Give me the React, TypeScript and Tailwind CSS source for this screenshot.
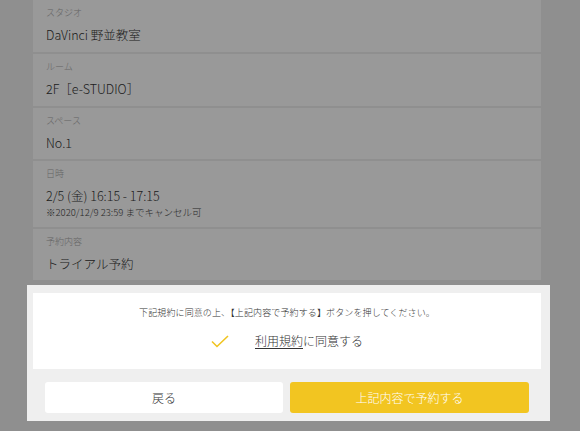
import React from "react";

const font = { fontFamily: '"Noto Sans CJK JP", "Noto Sans", sans-serif' };

function Row({
  label,
  value,
  note,
  h,
}: {
  label: string;
  value: string;
  note?: string;
  h: string;
}) {
  return (
    <div className={`bg-white px-[13px] pt-[6px] ${h}`}>
      <div className="text-[9px] leading-[14px] text-[#aaaaaa]">{label}</div>
      <div className="mt-[6px] text-[12.5px] leading-[18px] text-[#333333]">{value}</div>
      {note && <div className="text-[9.5px] leading-[14px] text-[#444444]">{note}</div>}
    </div>
  );
}

export default function App() {
  return (
    <div className="relative h-[431px] w-[580px] overflow-hidden bg-[#eeeeee] font-light" style={font}>
      <div className="ml-[33px] flex w-[508px] flex-col gap-[2px]">
        <Row label="スタジオ" value="DaVinci 野並教室" h="h-[52px]" />
        <Row label="ルーム" value="2F［e-STUDIO］" h="h-[52px]" />
        <Row label="スペース" value="No.1" h="h-[51px]" />
        <Row
          label="日時"
          value="2/5 (金) 16:15 - 17:15"
          note="※2020/12/9 23:59 までキャンセル可"
          h="h-[66px]"
        />
        <Row label="予約内容" value="トライアル予約" h="h-[51px]" />
      </div>

      <div className="absolute inset-0 bg-black/40" />

      <div className="absolute left-[27px] top-[285px] flex h-[136px] w-[523px] flex-col bg-[#efefef] pl-[6px] pr-[9px] pt-[8px]">
        <div className="flex h-[76px] w-[508px] flex-col items-center bg-white pt-[12px]">
          <div className="text-[9px] leading-[16px] tracking-[0.12px] text-[#333333]">
            下記規約に同意の上、【上記内容で予約する】ボタンを押してください。
          </div>
          <div className="mt-[10px] flex items-center">
            <svg width="18" height="13" viewBox="0 0 18 13" className="mr-[26px]">
              <path d="M1 6.5 L6 11.5 L17 1" fill="none" stroke="#f0c420" strokeWidth="1.6" />
            </svg>
            <span className="text-[12px] leading-[20px] text-[#333333]">
              <span className="underline underline-offset-[2px]">利用規約</span>に同意する
            </span>
          </div>
        </div>
        <div className="mt-[13px] flex gap-[7px] px-[12px]">
          <button className="flex h-[31px] w-[238px] items-center justify-center rounded-[3px] bg-white text-[12px] text-[#333333]">
            戻る
          </button>
          <button className="flex h-[31px] w-[239px] items-center justify-center rounded-[3px] bg-[#f2c521] text-[12px] text-white">
            上記内容で予約する
          </button>
        </div>
      </div>
    </div>
  );
}
